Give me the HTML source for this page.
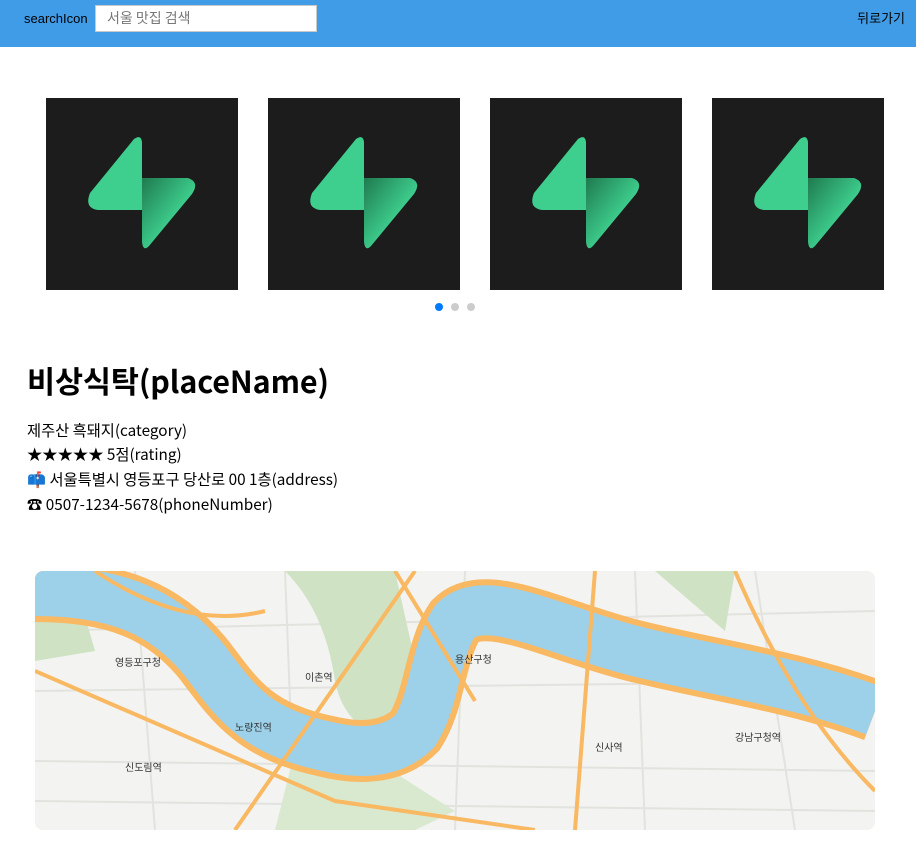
<!DOCTYPE html>
<html><head><meta charset="utf-8"><style>
*{margin:0;padding:0;box-sizing:border-box}
body{width:916px;height:848px;overflow:hidden;background:#fff;font-family:"Noto Sans CJK KR","Liberation Sans",sans-serif;color:#000;position:relative}
.hdr{position:absolute;left:0;top:0;width:916px;height:47px;background:#419ce7}
.si{position:absolute;left:24px;top:10px;font-size:13px;line-height:18px;font-family:"Liberation Sans","Noto Sans CJK KR",sans-serif}
.inp{position:absolute;left:95px;top:5px;width:222px;height:27px;background:#fff;border:1px solid #c9c9c9;font-size:14px;line-height:17px;color:#777;padding:4px 11px}
.back{position:absolute;right:11px;top:9px;font-size:13px;line-height:18px}
.img{position:absolute;top:98px;width:192px;height:192px;background:#1c1c1c;overflow:hidden}
.dot{position:absolute;top:303px;width:8px;height:8px;border-radius:50%;background:#ccc}
h1{position:absolute;left:27px;top:359px;font-size:30.5px;line-height:42px;font-weight:bold;letter-spacing:-0.1px}
.ln{position:absolute;left:27px;font-size:15.3px;line-height:20px}
.map{position:absolute;left:35px;top:571px;width:840px;height:259px;border-radius:8px;overflow:hidden;background:#f3f3f1}
</style></head><body>
<div class="hdr"><div class="si">searchIcon</div><div class="inp">서울 맛집 검색</div><div class="back">뒤로가기</div></div>

<svg width="0" height="0" style="position:absolute"><defs>
<linearGradient id="g" x1="0" y1="0" x2="1" y2="1"><stop offset="0" stop-color="#1f7a4f"/><stop offset="0.6" stop-color="#3ecf8e"/></linearGradient>
<symbol id="bolt" viewBox="0 0 192 192"><path d="M96 44 Q95 36 88 41 L44 95 Q38 110 52 112 L96 112 Z" fill="#3ecf8e"/><path d="M96 80 L142 80 Q154 84 146 96 L103 148 Q97 154 96 144 Z" fill="url(#g)"/></symbol>
</defs></svg>
<div class="img" style="left:46px"><svg width="192" height="192"><use href="#bolt"/></svg></div>
<div class="img" style="left:268px"><svg width="192" height="192"><use href="#bolt"/></svg></div>
<div class="img" style="left:490px"><svg width="192" height="192"><use href="#bolt"/></svg></div>
<div class="img" style="left:712px;width:172px"><svg width="192" height="192"><use href="#bolt"/></svg></div>
<div class="dot" style="left:435px;background:#007bff"></div>
<div class="dot" style="left:451px"></div>
<div class="dot" style="left:467px"></div>

<h1>비상식탁(placeName)</h1>
<div class="ln" style="top:420px">제주산 흑돼지(category)</div>
<div class="ln" style="top:444px">★★★★★ 5점(rating)</div>
<div class="ln" style="top:469px">📫 서울특별시 영등포구 당산로 00 1층(address)</div>
<div class="ln" style="top:494px">☎ 0507-1234-5678(phoneNumber)</div>

<div class="map"><svg width="840" height="259">
<g stroke="#e2e2de" stroke-width="2" fill="none">
<path d="M0 60 L840 40 M0 120 L840 110 M0 190 L840 200 M100 0 L120 259 M250 0 L260 259 M430 0 L420 259 M600 0 L610 259 M720 0 L760 259 M0 230 L840 240"/>
</g>
<path d="M250 0 Q290 40 300 110 Q310 160 360 170 L380 90 L360 0 Z M620 0 L700 0 L690 60 Z M0 20 L40 10 L60 80 L0 90Z" fill="#cfe2c4"/>
<path d="M270 140 Q340 190 420 240 L380 259 L240 259Z" fill="#d9e9cf"/>
<path d="M0 20 C80 20 130 40 170 90 C200 130 220 160 290 175 C330 185 360 180 380 160 C400 130 400 80 420 50 C450 20 520 60 600 80 C680 100 760 110 840 140" stroke="#f9b862" stroke-width="62" fill="none"/>
<path d="M0 20 C80 20 130 40 170 90 C200 130 220 160 290 175 C330 185 360 180 380 160 C400 130 400 80 420 50 C450 20 520 60 600 80 C680 100 760 110 840 140" stroke="#9dd1ea" stroke-width="50" fill="none"/>
<path d="M60 0 Q150 60 230 40 M0 100 L300 230 L500 259 M200 259 L380 0 M560 0 L540 259 M700 0 Q760 140 840 220 M360 0 L440 130" stroke="#f9b862" stroke-width="4" fill="none"/>
<g font-size="10" fill="#333"><text x="80" y="95">영등포구청</text><text x="420" y="92">용산구청</text><text x="270" y="110">이촌역</text><text x="200" y="160">노량진역</text><text x="90" y="200">신도림역</text><text x="560" y="180">신사역</text><text x="700" y="170">강남구청역</text></g>
</svg></div>
</body></html>
